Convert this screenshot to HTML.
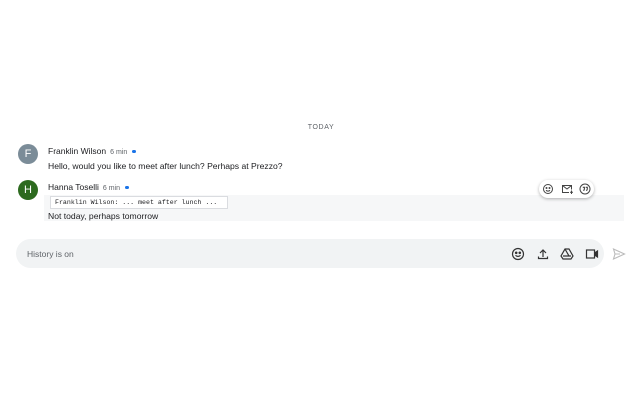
<!DOCTYPE html>
<html><head><style>
body{margin:0;width:640px;height:400px;background:#fff;font-family:"Liberation Sans",sans-serif;position:relative;overflow:hidden;color:#202124}
.a{position:absolute}
.av{position:absolute;width:20px;height:20px;border-radius:50%;color:#fff;font-size:11px;line-height:20px;text-align:center}
.nm{font-size:8.5px;color:#202124}
.tm{font-size:7px;color:#5f6368;margin-left:4px}
.dot{display:inline-block;width:3.5px;height:3.5px;border-radius:50%;background:#1a73e8;margin-left:5px;vertical-align:1px}
.msg{font-size:8.6px}
svg{position:absolute}
</style></head><body>
<div class="a" style="top:124px;left:0;width:642px;text-align:center;font-size:7px;letter-spacing:.6px;color:#5f6368">TODAY</div>
<div class="av" style="left:18px;top:144px;background:#7b8c98">F</div>
<div class="a nm" style="left:48px;top:146px">Franklin Wilson<span class="tm">6 min</span><span class="dot"></span></div>
<div class="a msg" style="left:48px;top:161px">Hello, would you like to meet after lunch? Perhaps at Prezzo?</div>
<div class="a" style="left:44px;top:195px;width:580px;height:26px;background:#f6f7f8"></div>
<div class="av" style="left:18px;top:180px;background:#2d6a1f">H</div>
<div class="a nm" style="left:48px;top:182px">Hanna Toselli<span class="tm">6 min</span><span class="dot"></span></div>
<div class="a" style="left:50px;top:196px;width:172px;height:11px;border:1px solid #dadce0;background:#fff;font-family:'Liberation Mono',monospace;font-size:6.6px;line-height:11px;padding-left:4px;white-space:nowrap;overflow:hidden">Franklin Wilson: ... meet after lunch ...</div>
<div class="a msg" style="left:48px;top:211px">Not today, perhaps tomorrow</div>
<div class="a" style="left:539px;top:180px;width:55px;height:18px;border-radius:9px;background:#fff;box-shadow:0 1px 3px rgba(0,0,0,.3)"></div>
<svg style="left:542px;top:183px" width="12" height="12" viewBox="0 0 12 12" fill="none" stroke="#444" stroke-width="1"><circle cx="6" cy="6" r="4.5"/><circle cx="4.5" cy="5" r=".5" fill="#444"/><circle cx="7.5" cy="5" r=".5" fill="#444"/><path d="M4 7.3q2 1.6 4 0"/></svg>
<svg style="left:561px;top:183px" width="13" height="12" viewBox="0 0 13 12" fill="none" stroke="#444" stroke-width="1"><path d="M8 9.5H1.5v-7h9v4"/><path d="M1.5 2.5l4.5 3.5 4.5-3.5"/><path d="M10.5 7.5v3.5M9 9.2h3"/></svg>
<svg style="left:579px;top:183px" width="12" height="12" viewBox="0 0 12 12" fill="none" stroke="#444" stroke-width="1"><circle cx="6" cy="6" r="5"/><path d="M3.8 4.3h1.6v1.8l-.8 1.8M6.7 4.3h1.6v1.8l-.8 1.8" stroke-width="1.1"/></svg>
<div class="a" style="left:16px;top:239px;width:588px;height:29px;border-radius:15px;background:#f1f3f4"></div>
<div class="a" style="left:27px;top:249px;font-size:8.5px;color:#5f6368">History is on</div>
<svg style="left:511px;top:247px" width="14" height="14" viewBox="0 0 14 14" fill="none" stroke="#333" stroke-width="1.2"><circle cx="7" cy="7" r="5.5"/><circle cx="5.2" cy="5.8" r=".7" fill="#333"/><circle cx="8.8" cy="5.8" r=".7" fill="#333"/><path d="M4.5 8.3q2.5 2.2 5 0"/></svg>
<svg style="left:536px;top:247px" width="14" height="14" viewBox="0 0 14 14" fill="none" stroke="#333" stroke-width="1.2"><path d="M7 10V3M4 6l3-3 3 3M2.5 9.5v2h9v-2"/></svg>
<svg style="left:560px;top:247px" width="14" height="14" viewBox="0 0 14 14" fill="none" stroke="#333" stroke-width="1.2"><path d="M5 2h4l4 7-2 3H3L1 9z"/><path d="M3 9h8M5 2l4 7"/></svg>
<svg style="left:585px;top:247px" width="14" height="14" viewBox="0 0 14 14" fill="none" stroke="#333" stroke-width="1.2"><rect x="1.5" y="3" width="8" height="8"/><path d="M9.5 6l3-2v6l-3-2" fill="#333"/></svg>
<svg style="left:612px;top:247px" width="14" height="14" viewBox="0 0 14 14" fill="none" stroke="#bbb" stroke-width="1.1"><path d="M1.5 2l11 5-11 5 1.5-5zM3 7h5"/></svg>
</body></html>
